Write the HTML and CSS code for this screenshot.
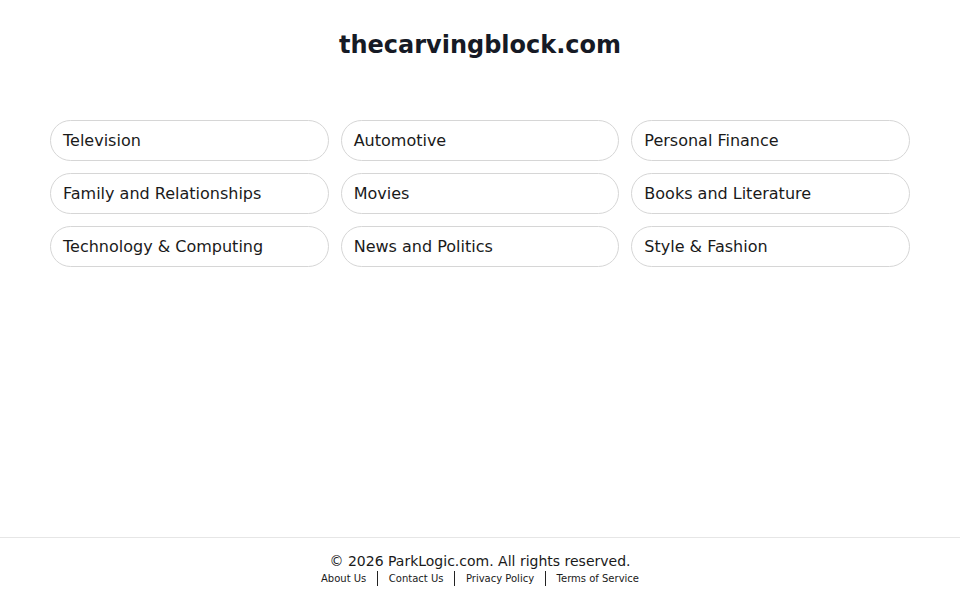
FILE: index.html
```html
<!DOCTYPE html>
<html lang="en">
<head>
<meta charset="utf-8">
<title>thecarvingblock.com</title>
<link rel="stylesheet" href="styles.css">
</head>
<body>
<div class="page">
  <header class="header">
    <h1 class="title">thecarvingblock.com</h1>
  </header>
  <main class="main">
    <div class="grid">
      <a class="pill" href="#">Television</a>
      <a class="pill" href="#">Automotive</a>
      <a class="pill" href="#">Personal Finance</a>
      <a class="pill" href="#">Family and Relationships</a>
      <a class="pill" href="#">Movies</a>
      <a class="pill" href="#">Books and Literature</a>
      <a class="pill" href="#">Technology &amp; Computing</a>
      <a class="pill" href="#">News and Politics</a>
      <a class="pill" href="#">Style &amp; Fashion</a>
    </div>
  </main>
  <footer class="footer">
    <div class="copy">© 2026 ParkLogic.com. All rights reserved.</div>
    <nav class="links">
      <a href="#">About Us</a><span class="sep"></span>
      <a href="#">Contact Us</a><span class="sep"></span>
      <a href="#">Privacy Policy</a><span class="sep"></span>
      <a href="#">Terms of Service</a>
    </nav>
  </footer>
</div>
</body>
</html>
```
FILE: styles.css
```css
* { box-sizing: border-box; }
html, body { margin: 0; padding: 0; }
body {
  font-family: "DejaVu Sans", "Liberation Sans", sans-serif;
  color: #1a1a1a;
  background: #fff;
}
.page {
  min-height: 100vh;
  display: flex;
  flex-direction: column;
}
.header {
  padding-top: 31px;
  text-align: center;
}
.title {
  margin: 0;
  font-size: 24px;
  line-height: 29px;
  font-weight: bold;
  color: #161a25;
}
.main {
  flex: 1;
  padding: 60px 50px 0;
}
.grid {
  display: grid;
  grid-template-columns: repeat(3, 1fr);
  column-gap: 12px;
  row-gap: 12px;
}
.pill {
  display: flex;
  align-items: center;
  height: 41px;
  padding: 0 12px;
  border: 1px solid #d6d6d6;
  border-radius: 21px;
  font-size: 16px;
  color: #1a1a1a;
  text-decoration: none;
}
.footer {
  border-top: 1px solid #e6e6e6;
  padding: 15px 0 13px;
  text-align: center;
}
.copy {
  font-size: 14px;
  line-height: 17px;
  color: #1a1a1a;
}
.links {
  display: flex;
  justify-content: center;
  align-items: center;
  height: 17px;
  font-size: 10px;
}
.links a {
  color: #1a1a1a;
  text-decoration: none;
}
.sep {
  width: 1.5px;
  height: 15px;
  background: #222;
  margin: 0 10.5px;
}
```
